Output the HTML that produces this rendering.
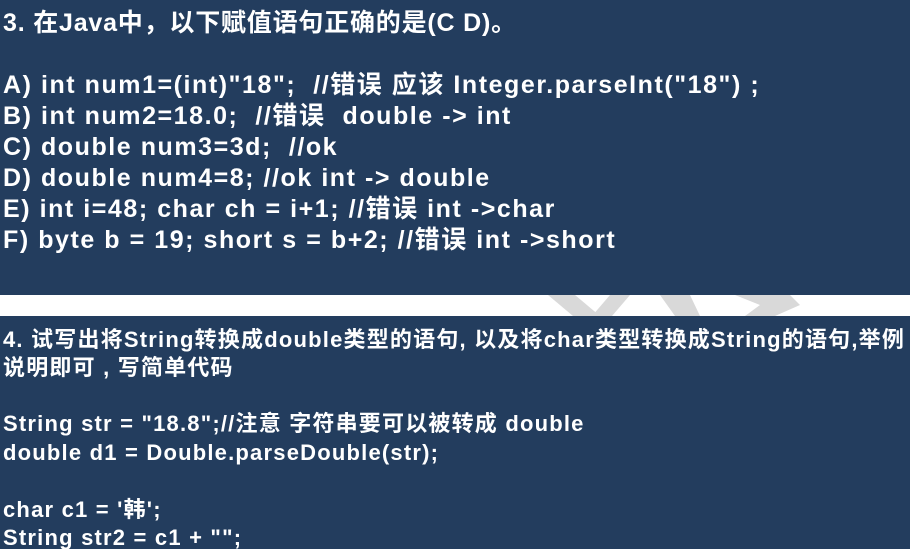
<!DOCTYPE html>
<html><head><meta charset="utf-8"><style>
html,body{margin:0;padding:0;width:910px;height:549px;overflow:hidden;background:#fff}
.p{position:absolute;left:0;width:910px;background:#233d5e;color:#fff;font-family:"Liberation Sans","Noto Sans CJK SC",sans-serif;font-weight:bold;white-space:pre}
.l{position:absolute;left:3px;line-height:30px}
#a{top:0;height:295px}
#b{top:316px;height:233px}
#a .l{font-size:25px;letter-spacing:1.55px}
#b .l{font-size:22px;letter-spacing:1.2px}
</style></head><body>
<div class="p" id="a">
<div class="l" style="top:8px;letter-spacing:0.8px">3. 在Java中，以下赋值语句正确的是(C D)。</div>
<div class="l" style="top:70px">A) int num1=(int)"18";  //错误 应该 Integer.parseInt("18") ;</div>
<div class="l" style="top:101px">B) int num2=18.0;  //错误  double -&gt; int</div>
<div class="l" style="top:132px">C) double num3=3d;  //ok</div>
<div class="l" style="top:163px">D) double num4=8; //ok int -&gt; double</div>
<div class="l" style="top:194px">E) int i=48; char ch = i+1; //错误 int -&gt;char</div>
<div class="l" style="top:225px">F) byte b = 19; short s = b+2; //错误 int -&gt;short</div>
</div>
<svg style="position:absolute;left:0;top:295px" width="910" height="21">
<polygon points="548,0 575,0 600,21 573,21" fill="#d9d9d9"/>
<polygon points="610,0 630,0 612,21 592,21" fill="#d9d9d9"/>
<polygon points="660,0 690,0 700,21 675,21" fill="#d9d9d9"/>
<polygon points="735,0 790,0 800,10 775,21 745,21 760,10" fill="#d9d9d9"/>
</svg>
<div class="p" id="b">
<div class="l" style="top:9px">4. 试写出将String转换成double类型的语句, 以及将char类型转换成String的语句,举例</div>
<div class="l" style="top:37px">说明即可 , 写简单代码</div>
<div class="l" style="top:93px">String str = "18.8";//注意 字符串要可以被转成 double</div>
<div class="l" style="top:122px">double d1 = Double.parseDouble(str);</div>
<div class="l" style="top:179px">char c1 = '韩';</div>
<div class="l" style="top:207px">String str2 = c1 + "";</div>
</div>
</body></html>
